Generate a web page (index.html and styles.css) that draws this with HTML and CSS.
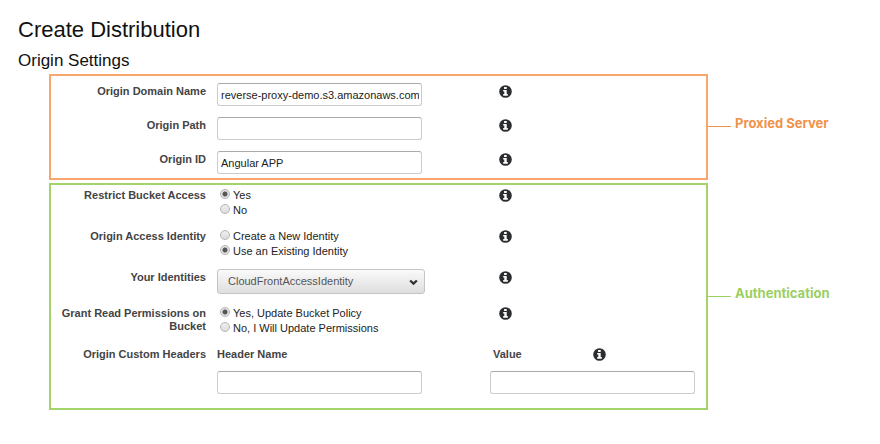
FILE: index.html
```html
<!DOCTYPE html>
<html lang="en">
<head>
  <meta charset="utf-8">
  <title>Create Distribution</title>
  <link rel="stylesheet" href="styles.css">
</head>
<body>
  <svg class="sprite" aria-hidden="true">
    <symbol id="info" viewBox="0 0 13 13">
      <circle cx="6.5" cy="6.5" r="6.3" fill="#2b2d31"/>
      <path d="M5.1 2h2.6v2H5.1zM4.2 5h3.5v4.1h1.1v1.6H4.2V9.1h1.1V6.5H4.2z" fill="#fff"/>
    </symbol>
  </svg>
  <h1>Create Distribution</h1>
  <h2>Origin Settings</h2>
  <form>
    <div class="group">
      <section class="panel proxied">
        <div class="row">
          <label class="name" for="domain">Origin Domain Name</label>
          <input type="text" id="domain" value="reverse-proxy-demo.s3.amazonaws.com">
          <svg class="info"><use href="#info"/></svg>
        </div>
        <div class="row">
          <label class="name" for="path">Origin Path</label>
          <input type="text" id="path">
          <svg class="info"><use href="#info"/></svg>
        </div>
        <div class="row">
          <label class="name" for="originId">Origin ID</label>
          <input type="text" id="originId" value="Angular APP">
          <svg class="info"><use href="#info"/></svg>
        </div>
      </section>
      <p class="callout orange">Proxied Server</p>
    </div>

    <div class="group">
      <section class="panel auth">
        <div class="row" role="radiogroup" aria-labelledby="restrict">
          <span class="name" id="restrict">Restrict Bucket Access</span>
          <div class="options">
            <label><input type="radio" name="restrict" checked>Yes</label>
            <label><input type="radio" name="restrict">No</label>
          </div>
          <svg class="info"><use href="#info"/></svg>
        </div>
        <div class="row" role="radiogroup" aria-labelledby="access">
          <span class="name" id="access">Origin Access Identity</span>
          <div class="options">
            <label><input type="radio" name="access">Create a New Identity</label>
            <label><input type="radio" name="access" checked>Use an Existing Identity</label>
          </div>
          <svg class="info"><use href="#info"/></svg>
        </div>
        <div class="row">
          <label class="name" for="identities">Your Identities</label>
          <div class="dropdown">
            <select id="identities">
              <option>CloudFrontAccessIdentity</option>
            </select>
            <svg class="chevron" viewBox="0 0 8 6"><path d="M1 1.2l3 2.8 3-2.8" fill="none" stroke="#333" stroke-width="2"/></svg>
          </div>
          <svg class="info"><use href="#info"/></svg>
        </div>
        <div class="row" role="radiogroup" aria-labelledby="grant">
          <span class="name" id="grant">Grant Read Permissions on Bucket</span>
          <div class="options">
            <label><input type="radio" name="grant" checked>Yes, Update Bucket Policy</label>
            <label><input type="radio" name="grant">No, I Will Update Permissions</label>
          </div>
          <svg class="info"><use href="#info"/></svg>
        </div>
        <div class="row headers">
          <span class="name">Origin Custom Headers</span>
          <div class="field">
            <label for="headerName">Header Name</label>
            <input type="text" id="headerName">
          </div>
          <div class="field">
            <div class="value">
              <label for="headerValue">Value</label>
              <svg class="info"><use href="#info"/></svg>
            </div>
            <input type="text" id="headerValue">
          </div>
        </div>
      </section>
      <p class="callout green">Authentication</p>
    </div>
  </form>
</body>
</html>
```
FILE: styles.css
```css
body {
  margin: 0;
  padding: 17px 0 34px;
  background: #fff;
  color: #222;
  font: 11px/15px "Liberation Sans", Arial, sans-serif;
}
h1,
h2 {
  margin: 0 18px;
  color: #111;
  font-weight: normal;
}
h1 {
  font-size: 22px;
  line-height: 26px;
}
h2 {
  margin-top: 8px;
  font-size: 17px;
  line-height: 20px;
}
form {
  display: flex;
  flex-direction: column;
  gap: 3px;
  margin: 3px 0 0 49px;
}
.sprite {
  display: none;
}
.group {
  display: grid;
  grid-template-columns: 1fr 172px;
  align-items: center;
}
.panel {
  display: grid;
  gap: 11px;
  border: 2px solid;
}
.proxied {
  padding: 7px 0 4px;
  border-color: #f9a66c;
}
.auth {
  padding: 2px 0 14px;
  border-color: #a3d46c;
}
.row {
  display: grid;
  grid-template-columns: 155px 1fr 207px;
  column-gap: 11px;
  align-items: start;
}
.headers {
  grid-template-columns: 155px 1fr 216px;
}
.name,
.field label {
  color: #444;
  font-weight: bold;
}
.name,
.field label {
  padding-top: 2px;
  line-height: 13px;
}
.name {
  text-align: right;
}
.info {
  width: 13px;
  height: 13px;
  margin-top: 2px;
}
input[type=text] {
  box-sizing: border-box;
  width: 205px;
  height: 23px;
  padding: 0 2px 0 3px;
  border: 1px solid #ccc;
  border-top-color: #aaa;
  border-radius: 3px;
  background: #fff;
  color: #222;
  font: inherit;
}
.options {
  padding-top: 1px;
  margin-bottom: -1px;
}
.options label {
  display: flex;
  align-items: center;
}
input[type=radio] {
  appearance: none;
  box-sizing: border-box;
  width: 10px;
  height: 10px;
  margin: 0 3px 4px;
  border: 1px solid #b5b5b5;
  border-radius: 50%;
  background: linear-gradient(#eee, #ddd);
}
input[type=radio]:checked {
  background: radial-gradient(circle, #555 2px, #e4e4e4 3px);
}
.dropdown {
  position: relative;
  width: 208px;
}
.dropdown select {
  display: block;
  appearance: none;
  width: 100%;
  height: 25px;
  padding: 0 24px 0 10px;
  border: 1px solid #c4c4c4;
  border-radius: 3px;
  background: linear-gradient(#fafafa, #dedede);
  color: #555;
  font: inherit;
}
.chevron {
  position: absolute;
  top: 10px;
  right: 7px;
  width: 9px;
  height: 7px;
}
.field {
  display: grid;
  gap: 10px;
}
.value {
  display: grid;
  grid-template-columns: 100px 13px;
  height: 15px;
  padding-left: 3px;
}
.callout {
  display: flex;
  align-items: center;
  gap: 4px;
  margin: 0 0 8px;
  font: bold 13px/16px Inter, sans-serif;
}
.callout::before {
  content: "";
  width: 23px;
  margin-top: 7px;
  border-top: 1px solid;
}
.orange {
  color: #f0924a;
}
.green {
  color: #9bcf63;
}
```
